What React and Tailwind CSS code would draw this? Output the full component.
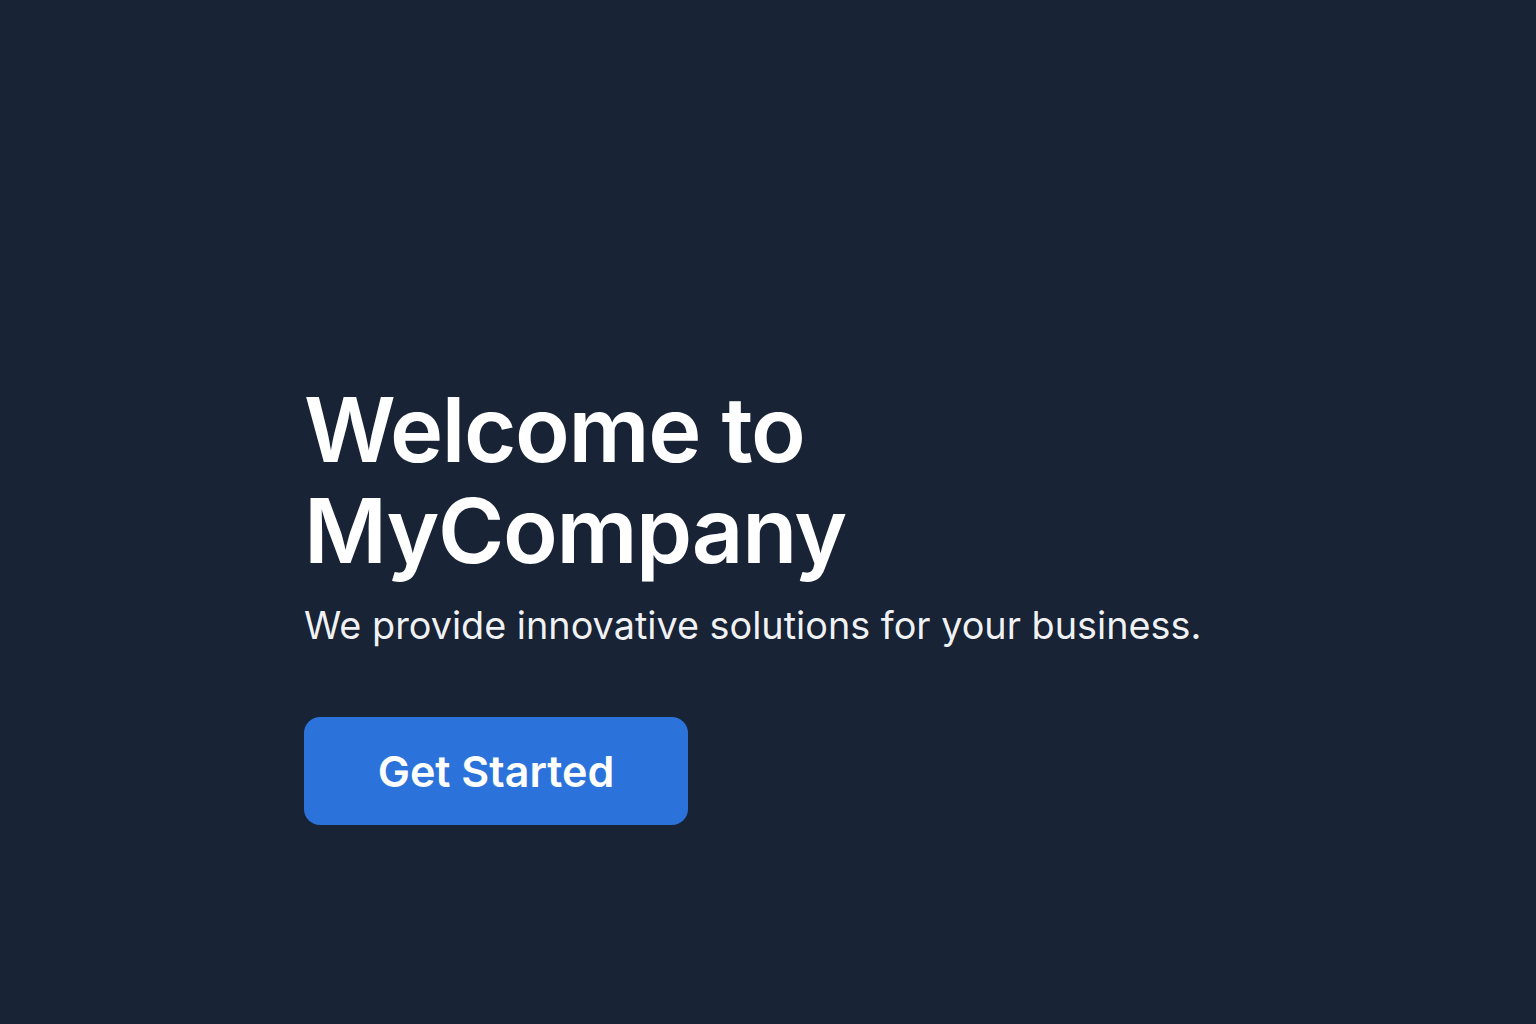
export default function App() {
  return (
    <div className="min-h-screen w-full bg-[#182336] font-['Inter','Noto_Sans',sans-serif] text-white">
      <section className="pl-[304px] pt-[379px]">
        <h1 className="text-[90px] leading-[101px] font-semibold tracking-[-0.015em]">
          Welcome to
          <br />
          MyCompany
        </h1>
        <p className="mt-[20px] text-[37.8px] leading-[48px] font-normal text-white/95">
          We provide innovative solutions for your business.
        </p>
        <button className="mt-[68px] flex h-[108px] w-[384px] items-center justify-center rounded-[16px] bg-[#2b73db] text-[43px] font-semibold">
          Get Started
        </button>
      </section>
    </div>
  );
}
